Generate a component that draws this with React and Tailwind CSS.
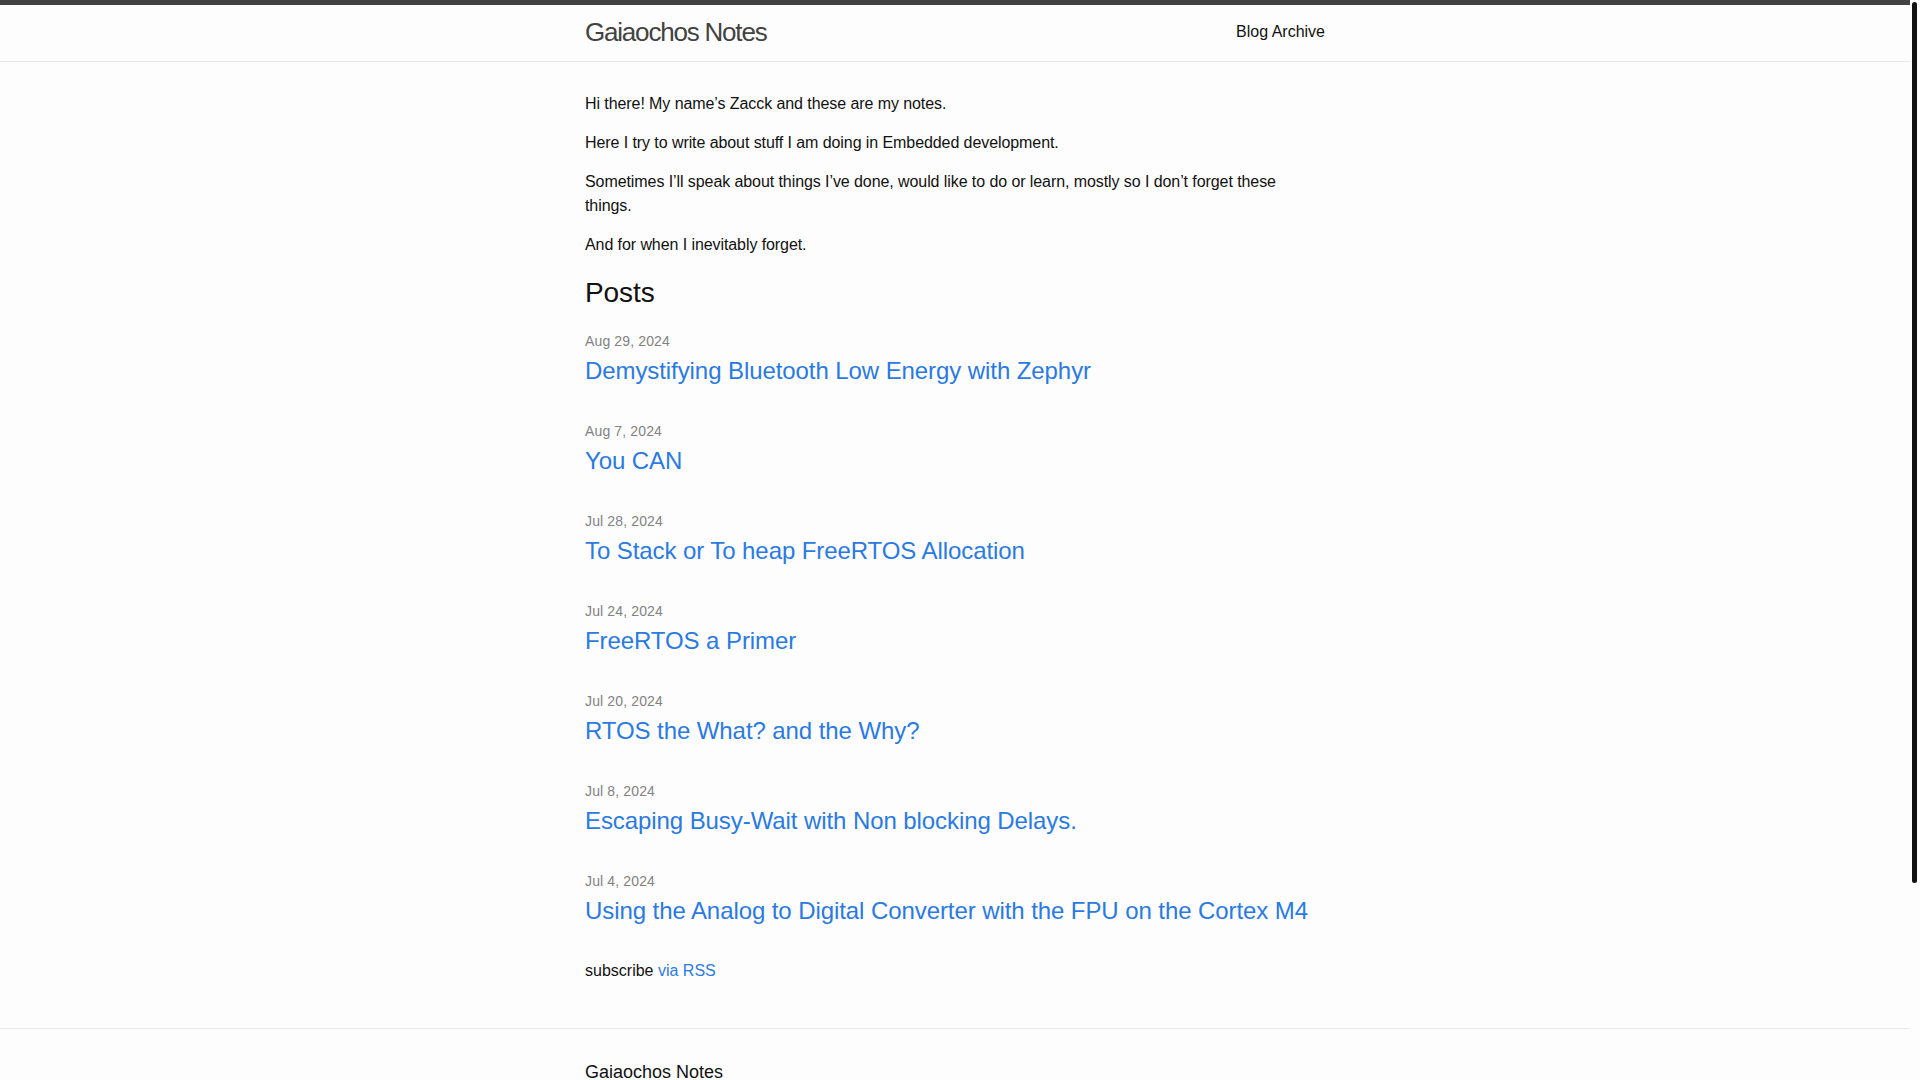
import React from "react";

const posts = [
  ["Aug 29, 2024", "Demystifying Bluetooth Low Energy with Zephyr"],
  ["Aug 7, 2024", "You CAN"],
  ["Jul 28, 2024", "To Stack or To heap FreeRTOS Allocation"],
  ["Jul 24, 2024", "FreeRTOS a Primer"],
  ["Jul 20, 2024", "RTOS the What? and the Why?"],
  ["Jul 8, 2024", "Escaping Busy-Wait with Non blocking Delays."],
  ["Jul 4, 2024", "Using the Analog to Digital Converter with the FPU on the Cortex M4"],
];

export default function App() {
  return (
    <div className="flex h-screen w-full overflow-hidden bg-[#fdfdfd] font-['Liberation_Sans',Arial,sans-serif] text-[16px] leading-[1.5] text-[#111]">
      <div className="h-full min-w-0 flex-1 overflow-hidden">
        <header className="min-h-[61.95px] border-t-[5px] border-b border-t-[#424242] border-b-[#e8e8e8]">
          <div className="mx-auto flex max-w-[800px] items-start justify-between px-[30px]">
            <a href="#" className="text-[26px] font-light leading-[54px] tracking-[-1.2px] text-[#424242]">
              Gaiaochos Notes
            </a>
            <nav className="leading-[54px]">
              <a href="#" className="text-[#111]">
                Blog Archive
              </a>
            </nav>
          </div>
        </header>
        <main className="py-[30px]">
          <div className="mx-auto max-w-[800px] px-[30px] tracking-[-0.005em]">
            <p className="mb-[15px]">Hi there! My name’s Zacck and these are my notes.</p>
            <p className="mb-[15px]">Here I try to write about stuff I am doing in Embedded development.</p>
            <p className="mb-[15px]">
              Sometimes I’ll speak about things I’ve done, would like to do or learn, mostly so I don’t forget these
              things.
            </p>
            <p className="mb-[15px]">And for when I inevitably forget.</p>
            <h2 className="mb-[15px] text-[28px] font-normal leading-[1.5]">Posts</h2>
            <ul className="mb-[30px]">
              {posts.map(([d, t]) => (
                <li key={t} className="mb-[30px]">
                  <div className="h-[24px]">
                    <span className="text-[14px] tracking-[0.01em] text-[#828282]">{d}</span>
                  </div>
                  <h3 className="text-[24px] font-normal leading-[1.5]">
                    <a href="#" className="text-[#2a7ae2]">
                      {t}
                    </a>
                  </h3>
                </li>
              ))}
            </ul>
            <p className="mb-[15px] tracking-normal">
              subscribe{" "}
              <a href="#" className="text-[#2a7ae2]">
                via RSS
              </a>
            </p>
          </div>
        </main>
        <footer className="border-t border-[#e8e8e8] pt-[30px]">
          <div className="mx-auto max-w-[800px] px-[30px]">
            <h2 className="text-[18px] font-normal leading-[1.5]">Gaiaochos Notes</h2>
          </div>
        </footer>
      </div>
      <div className="h-full w-[10px] shrink-0 bg-[#fdfdfd]">
        <div className="ml-[2px] mt-[2px] h-[881px] w-[5px] rounded-full bg-[#111]" />
      </div>
    </div>
  );
}
